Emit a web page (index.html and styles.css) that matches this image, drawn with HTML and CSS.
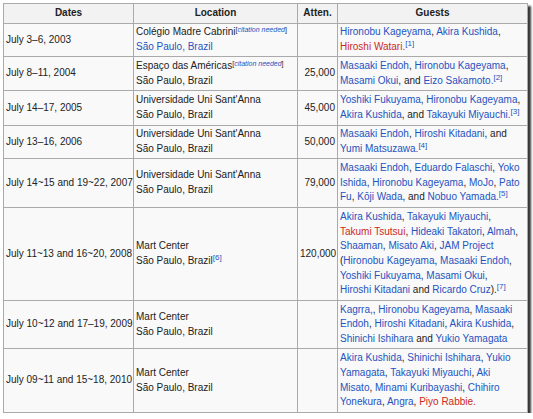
FILE: index.html
```html
<!DOCTYPE html>
<html>
<head>
<meta charset="utf-8">
<link rel="stylesheet" href="styles.css">
</head>
<body>
<table class="wikitable">
  <colgroup>
    <col class="c-dates">
    <col class="c-loc">
    <col class="c-att">
    <col class="c-guests">
  </colgroup>
  <thead>
    <tr class="r-head"><th>Dates</th><th>Location</th><th>Atten.</th><th>Guests</th></tr>
  </thead>
  <tbody>
    <tr class="r-33">
      <td>July 3–6, 2003</td>
      <td>Colégio Madre Cabrini<sup class="cn">[<i class="lnk">citation needed</i>]</sup><br><a class="lnk">São Paulo, Brazil</a></td>
      <td class="num"></td>
      <td><a class="lnk">Hironobu Kageyama</a>, <a class="lnk">Akira Kushida</a>,<br><a class="new">Hiroshi Watari.</a><sup class="ref">[1]</sup></td>
    </tr>
    <tr class="r-34">
      <td>July 8–11, 2004</td>
      <td>Espaço das Américas<sup class="cn">[<i class="lnk">citation needed</i>]</sup><br>São Paulo, Brazil</td>
      <td class="num">25,000</td>
      <td><a class="lnk">Masaaki Endoh</a>, <a class="lnk">Hironobu Kageyama</a>,<br><a class="lnk">Masami Okui</a>, and <a class="lnk">Eizo Sakamoto.</a><sup class="ref">[2]</sup></td>
    </tr>
    <tr class="r-35">
      <td>July 14–17, 2005</td>
      <td>Universidade Uni Sant'Anna<br>São Paulo, Brazil</td>
      <td class="num">45,000</td>
      <td><a class="lnk">Yoshiki Fukuyama</a>, <a class="lnk">Hironobu Kageyama</a>,<br><a class="lnk">Akira Kushida</a>, and <a class="lnk">Takayuki Miyauchi.</a><sup class="ref">[3]</sup></td>
    </tr>
    <tr class="r-33">
      <td>July 13–16, 2006</td>
      <td>Universidade Uni Sant'Anna<br>São Paulo, Brazil</td>
      <td class="num">50,000</td>
      <td><a class="lnk">Masaaki Endoh</a>, <a class="lnk">Hiroshi Kitadani</a>, and<br><a class="lnk">Yumi Matsuzawa.</a><sup class="ref">[4]</sup></td>
    </tr>
    <tr class="r-49">
      <td>July 14~15 and 19~22, 2007</td>
      <td>Universidade Uni Sant'Anna<br>São Paulo, Brazil</td>
      <td class="num">79,000</td>
      <td><a class="lnk">Masaaki Endoh</a>, <a class="lnk">Eduardo Falaschi</a>, <a class="lnk">Yoko</a><br><a class="lnk">Ishida</a>, <a class="lnk">Hironobu Kageyama</a>, <a class="lnk">MoJo</a>, <a class="lnk">Pato</a><br><a class="lnk">Fu</a>, <a class="lnk">Kōji Wada</a>, and <a class="lnk">Nobuo Yamada.</a><sup class="ref">[5]</sup></td>
    </tr>
    <tr class="r-93">
      <td>July 11~13 and 16~20, 2008</td>
      <td>Mart Center<br>São Paulo, Brazil<sup class="ref">[6]</sup></td>
      <td class="num">120,000</td>
      <td><a class="lnk">Akira Kushida</a>, <a class="lnk">Takayuki Miyauchi</a>,<br><a class="new">Takumi Tsutsui</a>, <a class="lnk">Hideaki Takatori</a>, <a class="lnk">Almah</a>,<br><a class="lnk">Shaaman</a>, <a class="lnk">Misato Aki</a>, <a class="lnk">JAM Project</a><br>(<a class="lnk">Hironobu Kageyama</a>, <a class="lnk">Masaaki Endoh</a>,<br><a class="lnk">Yoshiki Fukuyama</a>, <a class="lnk">Masami Okui</a>,<br><a class="lnk">Hiroshi Kitadani</a> and <a class="lnk">Ricardo Cruz</a>).<sup class="ref">[7]</sup></td>
    </tr>
    <tr class="r-48">
      <td>July 10~12 and 17–19, 2009</td>
      <td>Mart Center<br>São Paulo, Brazil</td>
      <td class="num"></td>
      <td><a class="lnk">Kagrra,</a>, <a class="lnk">Hironobu Kageyama</a>, <a class="lnk">Masaaki</a><br><a class="lnk">Endoh</a>, <a class="lnk">Hiroshi Kitadani</a>, <a class="lnk">Akira Kushida</a>,<br><a class="lnk">Shinichi Ishihara</a> and <a class="lnk">Yukio Yamagata</a></td>
    </tr>
    <tr class="r-64">
      <td>July 09~11 and 15~18, 2010</td>
      <td>Mart Center<br>São Paulo, Brazil</td>
      <td class="num"></td>
      <td><a class="lnk">Akira Kushida</a>, <a class="lnk">Shinichi Ishihara</a>, <a class="lnk">Yukio</a><br><a class="lnk">Yamagata</a>, <a class="lnk">Takayuki Miyauchi</a>, <a class="lnk">Aki</a><br><a class="lnk">Misato</a>, <a class="lnk">Minami Kuribayashi</a>, <a class="lnk">Chihiro</a><br><a class="lnk">Yonekura</a>, <a class="lnk">Angra</a>, <a class="new">Piyo Rabbie.</a></td>
    </tr>
  </tbody>
</table>
</body>
</html>
```

FILE: styles.css
```css
html, body {
  margin: 0;
  padding: 0;
  background: #ffffff;
}
body {
  padding: 3px 0 0 3px;
  font-family: "Liberation Sans", Arial, sans-serif;
  font-size: 10px;
  color: #222222;
}
.wikitable {
  border-collapse: collapse;
  table-layout: fixed;
  width: 524px;
  background: #f9f9f9;
  border: 1px solid #aaaaaa;
  box-shadow: 3px 3px 2px rgba(20, 20, 20, 0.85);
}
.c-dates { width: 130px; }
.c-loc { width: 164px; }
.c-att { width: 40px; }
.c-guests { width: 190px; }
.wikitable th,
.wikitable td {
  border: 1px solid #aaaaaa;
  padding: 0 2px;
  line-height: 14.6px;
  vertical-align: middle;
  white-space: nowrap;
  overflow: hidden;
}
.wikitable th {
  background: #f2f2f2;
  font-weight: bold;
  text-align: center;
}
.r-head { height: 20px; }
.r-33 { height: 33px; }
.r-34 { height: 34px; }
.r-35 { height: 35px; }
.r-48 { height: 48px; }
.r-49 { height: 49px; }
.r-64 { height: 64px; }
.r-93 { height: 93px; }
.wikitable td.num {
  text-align: right;
}
.lnk {
  color: #2553bf;
  text-decoration: none;
}
.new {
  color: #cc2a1a;
  text-decoration: none;
}
sup {
  line-height: 0;
  vertical-align: 0.5em;
}
sup.cn {
  font-size: 7px;
  color: #222222;
}
sup.cn i {
  font-style: italic;
}
sup.ref {
  font-size: 8px;
  color: #2553bf;
}
```
